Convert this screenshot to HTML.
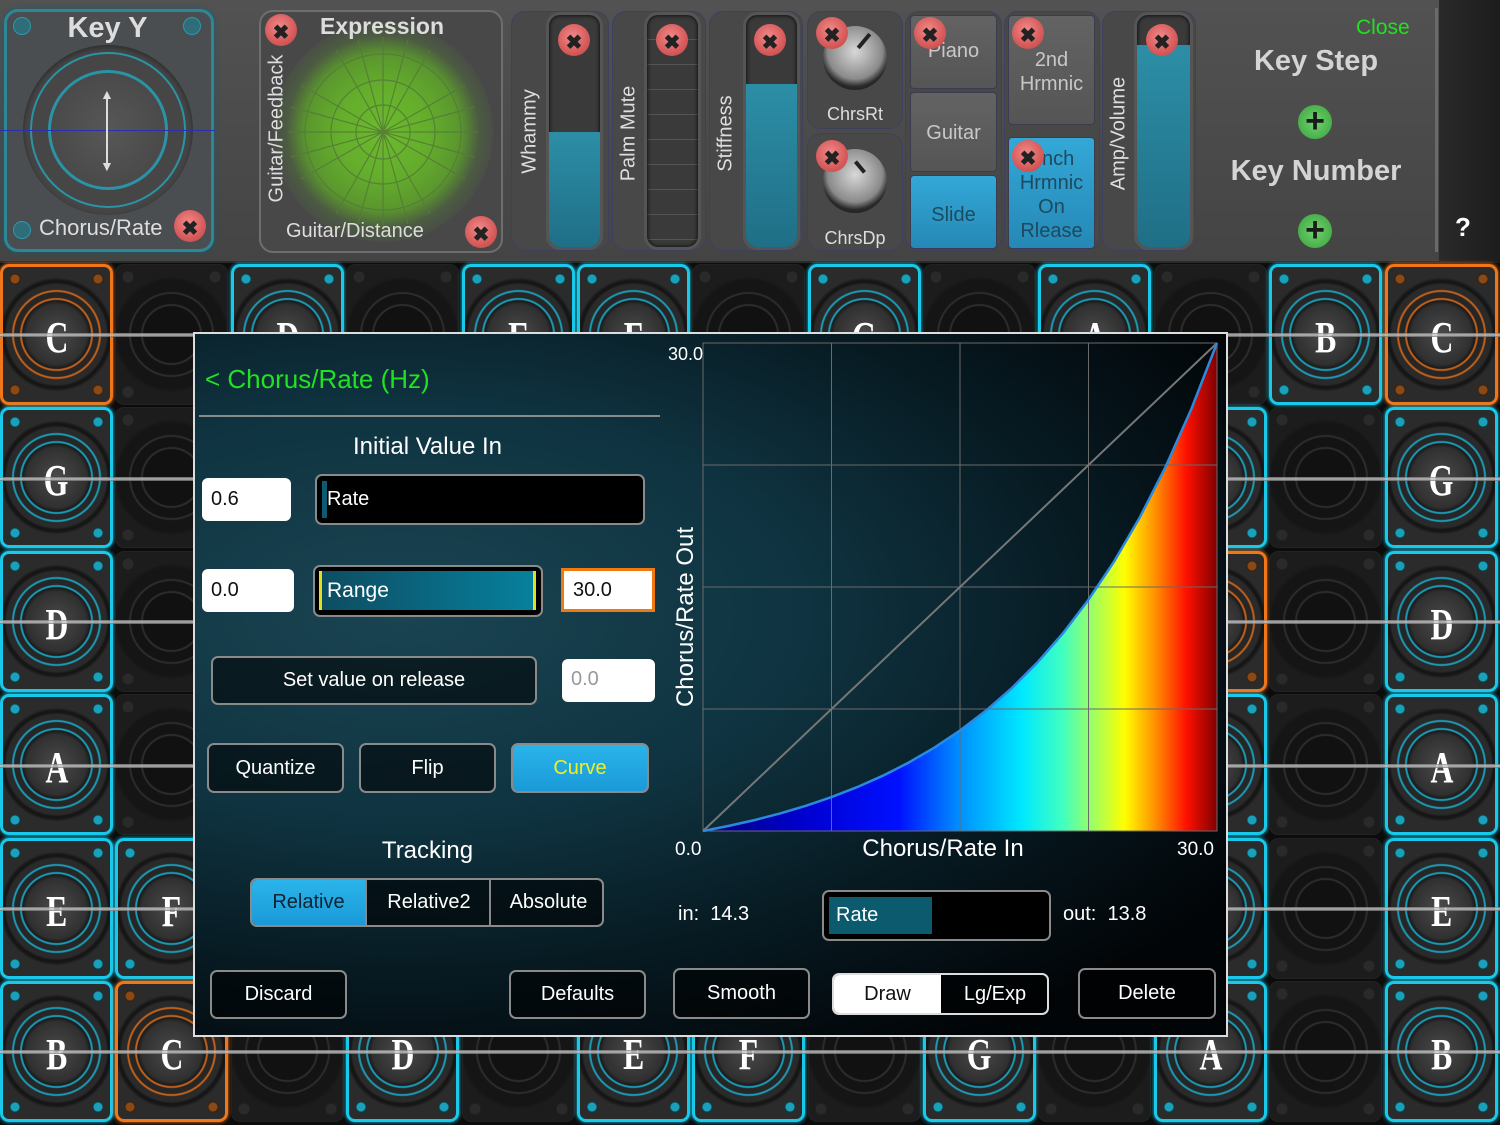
<!DOCTYPE html>
<html><head><meta charset="utf-8">
<style>
*{margin:0;padding:0;box-sizing:border-box}
body{width:1500px;height:1125px;position:relative;overflow:hidden;background:#0c0c0c;font-family:"Liberation Sans",sans-serif;color:#fff}
.a{position:absolute}
#top{left:0;top:0;width:1500px;height:263px;background:linear-gradient(#525252,#444);border-bottom:2px solid #2a2a2a}
.xb{position:absolute;width:32px;height:32px;border-radius:50%;background:radial-gradient(circle at 45% 40%,#f08a8a,#d75a5a 60%,#b84545);color:#222;font-weight:bold;font-size:26px;line-height:32px;text-align:center}
.xb:before{content:"\2716";font-size:20px}
.vt{position:absolute;transform:rotate(-90deg);transform-origin:center;white-space:nowrap;color:#ddd;font-size:20px;text-align:center}
.pnl{position:absolute;border:1px solid #3e4060;border-radius:14px;background:#484848}
.trk{position:absolute;border-radius:14px;background:#3a3a3a;border:3px solid #555;overflow:hidden;box-shadow:inset 0 0 4px #000}
.fill{position:absolute;left:0;right:0;bottom:0;background:linear-gradient(#2c8ea6,#1f6f86)}
.btn{position:absolute;border-radius:4px;background:linear-gradient(#636363,#555);color:#c8c8c8;font-size:20px;text-align:center;border:1px solid #3c3c50}
.btn.b{background:linear-gradient(#33a8d8,#2588b5);color:#1e4a5e}
.knob{position:absolute;width:64px;height:64px;border-radius:50%;background:radial-gradient(circle at 50% 40%,#d8d8d8,#8a8a8a 55%,#2a2a2a 70%,#111 100%)}
.c{position:absolute;width:113px;height:141px;border-radius:9px;color:#fff;font-family:"Liberation Serif",serif;font-weight:bold;font-size:44px;text-align:center;line-height:141px}
.c span{display:inline-block;transform:scaleX(.72)}
.cy{border:3px solid #18c9ea;box-shadow:0 0 4px #18c9ea;
background:
radial-gradient(circle at 12px 12px,#1aa0b8 0 4px,#0d3a44 5px,transparent 6px),
radial-gradient(circle at calc(100% - 12px) 12px,#1aa0b8 0 4px,#0d3a44 5px,transparent 6px),
radial-gradient(circle at 12px calc(100% - 12px),#1aa0b8 0 4px,#0d3a44 5px,transparent 6px),
radial-gradient(circle at calc(100% - 12px) calc(100% - 12px),#1aa0b8 0 4px,#0d3a44 5px,transparent 6px),
radial-gradient(circle at 50% 50%,#4a4a4a 0,#303030 30px,#1a1a1a 34px,#1a9ab4 35px 36px,#262626 37px 42px,#1a9ab4 43px 44px,#2a2a2a 45px 50px,#161616 52px 54px,#2b2b2b 57px)}
.or{border:3px solid #f0761a;box-shadow:0 0 4px #f0761a;
background:
radial-gradient(circle at 12px 12px,#8a4a18 0 4px,#3a1e08 5px,transparent 6px),
radial-gradient(circle at calc(100% - 12px) 12px,#8a4a18 0 4px,#3a1e08 5px,transparent 6px),
radial-gradient(circle at 12px calc(100% - 12px),#8a4a18 0 4px,#3a1e08 5px,transparent 6px),
radial-gradient(circle at calc(100% - 12px) calc(100% - 12px),#8a4a18 0 4px,#3a1e08 5px,transparent 6px),
radial-gradient(circle at 50% 50%,#4a4a4a 0,#303030 30px,#1a1a1a 34px,#c0601a 35px 36px,#262626 37px 42px,#c0601a 43px 44px,#2a2a2a 45px 50px,#161616 52px 54px,#2b2b2b 57px)}
.dk{border:1px solid #222;
background:
radial-gradient(circle at 12px 12px,#2a2a2a 0 5px,transparent 6px),
radial-gradient(circle at calc(100% - 12px) 12px,#2a2a2a 0 5px,transparent 6px),
radial-gradient(circle at 12px calc(100% - 12px),#2a2a2a 0 5px,transparent 6px),
radial-gradient(circle at calc(100% - 12px) calc(100% - 12px),#2a2a2a 0 5px,transparent 6px),
radial-gradient(circle at 50% 50%,#111 0 28px,#2c2c2c 29px 30px,#131313 31px 40px,#2c2c2c 41px 42px,#151515 43px 54px,#1c1c1c 58px)}
.str{position:absolute;left:0;width:1500px;height:4px;background:linear-gradient(#777,#ddd,#666)}
#modal{left:193px;top:332px;width:1035px;height:705px;border:2px solid #ddd;background:radial-gradient(ellipse at 20% 40%,#1a4452 0,#0f3340 35%,#071a22 60%,#020508 85%);overflow:hidden}
.ob{position:absolute;border:2px solid #8a8a8a;border-radius:7px;background:rgba(0,0,0,.55);color:#fff;font-size:20px;text-align:center}
.inp{position:absolute;background:#fff;border-radius:6px;color:#111;font-size:20px;padding-left:9px}
.t{position:absolute;white-space:nowrap}
</style></head><body>

<div class="a" id="top"></div>
<div class="a" style="left:4px;top:9px;width:210px;height:243px;border:3px solid #2e8797;border-radius:14px;background:#4a4e51;box-shadow:0 0 6px #1d5d6a"></div>
<div class="a" style="left:13px;top:17px;width:18px;height:18px;border-radius:50%;background:#2f6d78;border:1px solid #2a9aae"></div>
<div class="a" style="left:183px;top:17px;width:18px;height:18px;border-radius:50%;background:#2f6d78;border:1px solid #2a9aae"></div>
<div class="a" style="left:13px;top:221px;width:18px;height:18px;border-radius:50%;background:#2f6d78;border:1px solid #2a9aae"></div>
<div class="a" style="left:23px;top:45px;width:170px;height:170px;border-radius:50%;background:#464646;box-shadow:inset 0 2px 6px #2a2a2a"></div>
<div class="a" style="left:30px;top:52px;width:156px;height:156px;border-radius:50%;border:2px solid #2a93a6"></div>
<div class="a" style="left:48px;top:70px;width:120px;height:120px;border-radius:50%;border:3px solid #2a93a6;background:radial-gradient(#575757,#444)"></div>
<div class="a" style="left:0;top:130px;width:215px;height:1px;background:#2a30b0"></div>
<div class="a" style="left:106px;top:94px;width:2px;height:72px;background:#ddd"></div>
<div class="t" style="left:100px;top:86px;font-size:14px;color:#ddd">▲</div>
<div class="t" style="left:100px;top:158px;font-size:14px;color:#ddd">▼</div>
<div class="t" style="left:0;width:215px;text-align:center;top:12px;font-size:29px;font-weight:bold;color:#ddd">Key Y</div>
<div class="t" style="left:39px;top:215px;font-size:22px;color:#ddd">Chorus/Rate</div>
<div class="xb" style="left:174px;top:210px"></div>

<div class="a" style="left:259px;top:10px;width:244px;height:243px;border:2px solid #6e6e6e;border-radius:14px;background:#484848"></div>
<div class="a" style="left:273px;top:22px;width:220px;height:220px;border-radius:50%;background:radial-gradient(circle,#6cbb2c 0,#64ad2c 30%,#5a962e 50%,rgba(80,110,60,.5) 62%,rgba(72,72,72,0) 75%)"></div>
<svg class="a" style="left:283px;top:32px" width="200" height="200" viewBox="-100 -100 200 200" stroke="#557a38" stroke-width="1.2" fill="none" opacity=".85">
<circle r="27"/><circle r="52"/><circle r="78"/>
<path d="M-95 0H95M0-95V95M-82-47L82 47M-82 47L82-47M-47-82L47 82M-47 82L47-82M-92-25L92 25M-92 25L92-25M-25-92L25 92M-25 92L25-92"/>
</svg>
<div class="t" style="left:320px;top:13px;font-size:23px;font-weight:bold;color:#ddd">Expression</div>
<div class="vt" style="left:197px;top:117px;width:160px">Guitar/Feedback</div>
<div class="t" style="left:286px;top:220px;font-size:20px;color:#ddd">Guitar/Distance</div>
<div class="xb" style="left:265px;top:14px"></div>
<div class="xb" style="left:465px;top:216px"></div>

<div class="pnl" style="left:511px;top:11px;width:98px;height:240px"></div>
<div class="trk" style="left:546px;top:12px;width:57px;height:238px"><div class="fill" style="top:117px"></div></div>
<div class="vt" style="left:470px;top:120px;width:120px">Whammy</div>
<div class="xb" style="left:558px;top:24px"></div>
<div class="pnl" style="left:612px;top:11px;width:94px;height:240px"></div>
<div class="trk" style="left:644px;top:12px;width:57px;height:238px;background:repeating-linear-gradient(#3a3a3a 0 24px,#555 24px 25px)"></div>
<div class="vt" style="left:569px;top:122px;width:120px">Palm Mute</div>
<div class="xb" style="left:656px;top:24px"></div>
<div class="pnl" style="left:709px;top:11px;width:94px;height:240px"></div>
<div class="trk" style="left:743px;top:12px;width:57px;height:238px"><div class="fill" style="top:69px"></div></div>
<div class="vt" style="left:666px;top:122px;width:120px">Stiffness</div>
<div class="xb" style="left:754px;top:24px"></div>
<div class="pnl" style="left:807px;top:11px;width:96px;height:118px"></div>
<div class="pnl" style="left:807px;top:133px;width:96px;height:118px"></div>
<div class="knob" style="left:823px;top:26px"></div>
<div class="a" style="left:862px;top:32px;width:4px;height:18px;background:#222;transform:rotate(40deg)"></div>
<div class="knob" style="left:823px;top:149px"></div>
<div class="a" style="left:858px;top:160px;width:4px;height:14px;background:#222;transform:rotate(-40deg)"></div>
<div class="t" style="left:807px;width:96px;text-align:center;top:104px;font-size:18px;color:#ddd">ChrsRt</div>
<div class="t" style="left:807px;width:96px;text-align:center;top:228px;font-size:18px;color:#ddd">ChrsDp</div>
<div class="xb" style="left:816px;top:17px"></div>
<div class="xb" style="left:816px;top:140px"></div>
<div class="pnl" style="left:905px;top:11px;width:97px;height:240px"></div>
<div class="btn" style="left:910px;top:15px;width:87px;height:74px;line-height:70px">Piano</div>
<div class="btn" style="left:910px;top:92px;width:87px;height:80px;line-height:80px">Guitar</div>
<div class="btn b" style="left:910px;top:175px;width:87px;height:74px;line-height:78px">Slide</div>
<div class="xb" style="left:914px;top:17px"></div>
<div class="pnl" style="left:1004px;top:11px;width:96px;height:240px"></div>
<div class="btn" style="left:1008px;top:15px;width:87px;height:110px;line-height:24px;padding-top:32px">2nd<br>Hrmnic</div>
<div class="btn b" style="left:1008px;top:137px;width:87px;height:112px;line-height:24px;padding-top:9px">Pnch<br>Hrmnic<br>On<br>Rlease</div>
<div class="xb" style="left:1012px;top:17px"></div>
<div class="xb" style="left:1012px;top:140px"></div>
<div class="pnl" style="left:1102px;top:11px;width:94px;height:240px"></div>
<div class="trk" style="left:1134px;top:12px;width:59px;height:238px"><div class="fill" style="top:30px"></div></div>
<div class="vt" style="left:1059px;top:122px;width:120px">Amp/Volume</div>
<div class="xb" style="left:1146px;top:24px"></div>
<div class="t" style="left:1356px;top:16px;font-size:21px;color:#22e022">Close</div>
<div class="t" style="left:1196px;width:240px;text-align:center;top:45px;font-size:29px;font-weight:bold;color:#d4d4d4">Key Step</div>
<div class="t" style="left:1196px;width:240px;text-align:center;top:155px;font-size:29px;font-weight:bold;color:#d4d4d4">Key Number</div>
<div class="a" style="left:1298px;top:105px;width:34px;height:34px;border-radius:50%;background:radial-gradient(#6fd46f,#3aa03a);color:#1a1a1a;font-size:34px;font-weight:bold;line-height:32px;text-align:center">+</div>
<div class="a" style="left:1298px;top:214px;width:34px;height:34px;border-radius:50%;background:radial-gradient(#6fd46f,#3aa03a);color:#1a1a1a;font-size:34px;font-weight:bold;line-height:32px;text-align:center">+</div>
<div class="a" style="left:1435px;top:8px;width:3px;height:244px;background:#6a6a6a"></div>
<div class="a" style="left:1439px;top:0;width:61px;height:263px;background:linear-gradient(90deg,#2a2a2a,#1c1c1c)"></div>
<div class="t" style="left:1455px;top:212px;font-size:26px;font-weight:bold;color:#fff">?</div>

<div class="c or" style="left:0;top:264px"><span>C</span></div><div class="c dk" style="left:115px;top:264px"></div><div class="c cy" style="left:231px;top:264px"><span>D</span></div><div class="c dk" style="left:346px;top:264px"></div><div class="c cy" style="left:462px;top:264px"><span>E</span></div><div class="c cy" style="left:577px;top:264px"><span>F</span></div><div class="c dk" style="left:692px;top:264px"></div><div class="c cy" style="left:808px;top:264px"><span>G</span></div><div class="c dk" style="left:923px;top:264px"></div><div class="c cy" style="left:1038px;top:264px"><span>A</span></div><div class="c dk" style="left:1154px;top:264px"></div><div class="c cy" style="left:1269px;top:264px"><span>B</span></div><div class="c or" style="left:1385px;top:264px"><span>C</span></div>

<div class="c cy" style="left:0;top:407px"><span>G</span></div><div class="c dk" style="left:115px;top:407px"></div><div class="c cy" style="left:231px;top:407px"><span>A</span></div><div class="c dk" style="left:346px;top:407px"></div><div class="c cy" style="left:462px;top:407px"><span>B</span></div><div class="c or" style="left:577px;top:407px"><span>C</span></div><div class="c dk" style="left:692px;top:407px"></div><div class="c cy" style="left:808px;top:407px"><span>D</span></div><div class="c dk" style="left:923px;top:407px"></div><div class="c cy" style="left:1038px;top:407px"><span>E</span></div><div class="c cy" style="left:1154px;top:407px"><span>F</span></div><div class="c dk" style="left:1269px;top:407px"></div><div class="c cy" style="left:1385px;top:407px"><span>G</span></div>

<div class="c cy" style="left:0;top:551px"><span>D</span></div><div class="c dk" style="left:115px;top:551px"></div><div class="c cy" style="left:231px;top:551px"><span>E</span></div><div class="c cy" style="left:346px;top:551px"><span>F</span></div><div class="c dk" style="left:462px;top:551px"></div><div class="c cy" style="left:577px;top:551px"><span>G</span></div><div class="c dk" style="left:692px;top:551px"></div><div class="c cy" style="left:808px;top:551px"><span>A</span></div><div class="c dk" style="left:923px;top:551px"></div><div class="c cy" style="left:1038px;top:551px"><span>B</span></div><div class="c or" style="left:1154px;top:551px"><span>C</span></div><div class="c dk" style="left:1269px;top:551px"></div><div class="c cy" style="left:1385px;top:551px"><span>D</span></div>

<div class="c cy" style="left:0;top:694px"><span>A</span></div><div class="c dk" style="left:115px;top:694px"></div><div class="c cy" style="left:231px;top:694px"><span>B</span></div><div class="c or" style="left:346px;top:694px"><span>C</span></div><div class="c dk" style="left:462px;top:694px"></div><div class="c cy" style="left:577px;top:694px"><span>D</span></div><div class="c dk" style="left:692px;top:694px"></div><div class="c cy" style="left:808px;top:694px"><span>E</span></div><div class="c cy" style="left:923px;top:694px"><span>F</span></div><div class="c dk" style="left:1038px;top:694px"></div><div class="c cy" style="left:1154px;top:694px"><span>G</span></div><div class="c dk" style="left:1269px;top:694px"></div><div class="c cy" style="left:1385px;top:694px"><span>A</span></div>

<div class="c cy" style="left:0;top:838px"><span>E</span></div><div class="c cy" style="left:115px;top:838px"><span>F</span></div><div class="c dk" style="left:231px;top:838px"></div><div class="c cy" style="left:346px;top:838px"><span>G</span></div><div class="c dk" style="left:462px;top:838px"></div><div class="c cy" style="left:577px;top:838px"><span>A</span></div><div class="c dk" style="left:692px;top:838px"></div><div class="c cy" style="left:808px;top:838px"><span>B</span></div><div class="c or" style="left:923px;top:838px"><span>C</span></div><div class="c dk" style="left:1038px;top:838px"></div><div class="c cy" style="left:1154px;top:838px"><span>D</span></div><div class="c dk" style="left:1269px;top:838px"></div><div class="c cy" style="left:1385px;top:838px"><span>E</span></div>

<div class="c cy" style="left:0;top:981px"><span>B</span></div><div class="c or" style="left:115px;top:981px"><span>C</span></div><div class="c dk" style="left:231px;top:981px"></div><div class="c cy" style="left:346px;top:981px"><span>D</span></div><div class="c dk" style="left:462px;top:981px"></div><div class="c cy" style="left:577px;top:981px"><span>E</span></div><div class="c cy" style="left:692px;top:981px"><span>F</span></div><div class="c dk" style="left:808px;top:981px"></div><div class="c cy" style="left:923px;top:981px"><span>G</span></div><div class="c dk" style="left:1038px;top:981px"></div><div class="c cy" style="left:1154px;top:981px"><span>A</span></div><div class="c dk" style="left:1269px;top:981px"></div><div class="c cy" style="left:1385px;top:981px"><span>B</span></div>

<div class="str" style="top:333px;opacity:.8"></div>
<div class="str" style="top:477px;opacity:.8"></div>
<div class="str" style="top:620px;opacity:.8"></div>
<div class="str" style="top:764px;opacity:.8"></div>
<div class="str" style="top:907px;opacity:.8"></div>
<div class="str" style="top:1050px;opacity:.8"></div>

<div class="a" id="modal"></div>
<div class="t" style="left:205px;top:364px;font-size:26px;color:#22e022">&lt; Chorus/Rate (Hz)</div>
<div class="a" style="left:199px;top:415px;width:461px;height:2px;background:#8a8a8a"></div>
<div class="t" style="left:193px;width:469px;text-align:center;top:433px;font-size:24px">Initial Value In</div>
<div class="inp" style="left:202px;top:478px;width:89px;height:43px;line-height:43px">0.6</div>
<div class="ob" style="left:315px;top:474px;width:330px;height:51px;text-align:left;padding-left:10px;line-height:47px;background:#000">Rate<div class="a" style="left:5px;top:5px;width:5px;height:37px;background:#0f5a72"></div></div>
<div class="inp" style="left:202px;top:569px;width:92px;height:43px;line-height:43px">0.0</div>
<div class="ob" style="left:313px;top:565px;width:230px;height:52px;background:#000"></div>
<div class="a" style="left:319px;top:571px;width:217px;height:39px;background:linear-gradient(90deg,#0d4d62,#07809c);border-left:3px solid #e0e020;border-right:3px solid #e0e020"></div>
<div class="t" style="left:327px;top:579px;font-size:21px">Range</div>
<div class="inp" style="left:561px;top:568px;width:94px;height:44px;line-height:38px;border:3px solid #f07a10;border-radius:0">30.0</div>
<div class="ob" style="left:211px;top:656px;width:326px;height:49px;line-height:45px">Set value on release</div>
<div class="inp" style="left:562px;top:659px;width:93px;height:43px;line-height:41px;color:#999">0.0</div>
<div class="ob" style="left:207px;top:743px;width:137px;height:50px;line-height:46px">Quantize</div>
<div class="ob" style="left:359px;top:743px;width:137px;height:50px;line-height:46px">Flip</div>
<div class="ob" style="left:511px;top:743px;width:138px;height:50px;line-height:46px;background:linear-gradient(#2ab4ea,#1a9ad8);color:#f0f020">Curve</div>
<div class="t" style="left:193px;width:469px;text-align:center;top:837px;font-size:24px">Tracking</div>
<div class="ob" style="left:250px;top:878px;width:354px;height:49px;line-height:45px;overflow:hidden">
 <div class="a" style="left:0;top:0;width:115px;height:45px;background:linear-gradient(#2ab4ea,#1a9ad8);color:#123;border-right:2px solid #888">Relative</div>
 <div class="a" style="left:117px;top:0;width:122px;height:45px;border-right:2px solid #888">Relative2</div>
 <div class="a" style="left:241px;top:0;width:111px;height:45px">Absolute</div>
</div>
<div class="ob" style="left:210px;top:970px;width:137px;height:49px;line-height:45px">Discard</div>
<div class="ob" style="left:509px;top:970px;width:137px;height:49px;line-height:45px">Defaults</div>

<svg class="a" style="left:703px;top:343px;overflow:visible" width="514" height="488" viewBox="0 0 514 488">
<defs><linearGradient id="g" x1="0" x2="1" y1="0" y2="0">
<stop offset="0" stop-color="#000080"/><stop offset=".2" stop-color="#0000d0"/><stop offset=".38" stop-color="#0010ff"/><stop offset=".5" stop-color="#0090ff"/><stop offset=".62" stop-color="#00e8ff"/><stop offset=".7" stop-color="#40ffc0"/><stop offset=".78" stop-color="#c0ff40"/><stop offset=".82" stop-color="#ffff00"/><stop offset=".88" stop-color="#ff9000"/><stop offset=".94" stop-color="#ff1000"/><stop offset="1" stop-color="#800000"/>
</linearGradient></defs>
<path id="cv" d="M0 488L25.7 482.9L51.4 477.1L77.1 470.4L102.8 462.8L128.5 454.1L154.2 444.1L179.9 432.7L205.6 419.6L231.3 404.7L257 387.5L282.7 367.9L308.4 345.5L334.1 319.8L359.8 290.5L385.5 256.7L411.2 218.3L436.9 174.2L462.6 123.8L488.3 66.1L514 0V488Z" fill="url(#g)"/>
<g stroke="#6a6a6a" stroke-width="1" fill="none">
<rect x="0" y="0" width="514" height="488"/>
<path d="M128.5 0V488M257 0V488M385.5 0V488M0 122H514M0 244H514M0 366H514"/>
</g>
<path d="M0 488L514 0" stroke="#777" stroke-width="2"/>
<path d="M0 488L25.7 482.9L51.4 477.1L77.1 470.4L102.8 462.8L128.5 454.1L154.2 444.1L179.9 432.7L205.6 419.6L231.3 404.7L257 387.5L282.7 367.9L308.4 345.5L334.1 319.8L359.8 290.5L385.5 256.7L411.2 218.3L436.9 174.2L462.6 123.8L488.3 66.1L514 0" stroke="#2a8ae0" stroke-width="2.5" fill="none"/>
</svg>
<div class="t" style="left:668px;top:344px;font-size:18px">30.0</div>
<div class="t" style="left:675px;top:839px;font-size:19px">0.0</div>
<div class="t" style="left:1177px;top:839px;font-size:19px">30.0</div>
<div class="t" style="left:843px;width:200px;text-align:center;top:835px;font-size:24px">Chorus/Rate In</div>
<div class="vt" style="left:586px;top:603px;width:200px;font-size:24px;color:#fff">Chorus/Rate Out</div>
<div class="t" style="left:678px;top:903px;font-size:20px">in:&nbsp;&nbsp;14.3</div>
<div class="ob" style="left:822px;top:890px;width:229px;height:51px;text-align:left;background:#000">
<div class="a" style="left:5px;top:5px;width:103px;height:37px;background:#0c5a6e"></div>
<div class="t" style="left:12px;top:12px;font-size:20px">Rate</div></div>
<div class="t" style="left:1063px;top:903px;font-size:20px">out:&nbsp;&nbsp;13.8</div>
<div class="ob" style="left:673px;top:968px;width:137px;height:51px;line-height:47px">Smooth</div>
<div class="ob" style="left:832px;top:973px;width:217px;height:42px;line-height:38px;overflow:hidden;border-color:#ddd">
 <div class="a" style="left:0;top:0;width:107px;height:40px;background:#fff;color:#111">Draw</div>
 <div class="a" style="left:107px;top:0;width:108px;height:40px">Lg/Exp</div>
</div>
<div class="ob" style="left:1078px;top:968px;width:138px;height:51px;line-height:47px">Delete</div>
</body></html>
